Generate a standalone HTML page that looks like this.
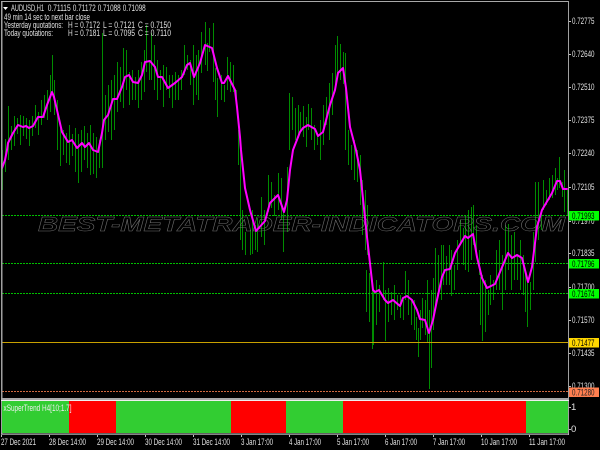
<!DOCTYPE html>
<html><head><meta charset="utf-8"><style>
html,body{margin:0;padding:0;background:#000;width:600px;height:450px;overflow:hidden}
svg{display:block}
text{font-family:"Liberation Sans",sans-serif;font-size:9.5px;fill:#e0e0e0}
</style></head><body>
<svg width="600" height="450" viewBox="0 0 600 450" xmlns="http://www.w3.org/2000/svg">
<rect width="600" height="450" fill="#000"/>
<path fill="none" stroke="#008c00" stroke-width="1" d="M2.5 150V190M5.5 139V172M8.5 106V160M11.5 126V150M14.5 116V146M17.5 118V134M20.5 115V145M23.5 116V136M26.5 118V139M29.5 120V146M32.5 116V136M35.5 105V128M38.5 112V135M41.5 100V125M44.5 95V118M47.5 90V120M50.5 75V112M52.5 55V95M54.5 80V115M57.5 100V150M60.5 128V166M63.5 130V155M66.5 133V163M69.5 125V165M72.5 134V156M75.5 128V172M78.5 134V183M81.5 130V172M84.5 126V160M87.5 133V168M90.5 125V175M93.5 133V174M96.5 137V178M99.5 140V168M102.5 33V168M105.5 95V140M108.5 85V132M111.5 80V140M114.5 75V130M117.5 62V112M120.5 67V102M123.5 48V108M126.5 50V90M129.5 72V105M132.5 70V100M135.5 77V100M138.5 70V108M141.5 62V100M144.5 50V92M146.5 25V72M149.5 60V80M151.5 33V80M154.5 45V90M157.5 60V100M160.5 70V90M163.5 65V107M166.5 67V90M169.5 75V98M172.5 75V108M175.5 72V100M178.5 75V100M181.5 70V90M184.5 45V75M187.5 55V70M190.5 60V85M193.5 45V105M196.5 55V95M198.5 50V100M201.5 32V73M205.5 22V65M207.5 43V71M209.5 28V52M213.5 23V82M215.5 68V100M217.5 78V117M221.5 75V100M224.5 85V102M227.5 57V90M230.5 62V92M233.5 65V92M236.5 90V105M238.5 130V165M240.5 140V240M242.5 210V250M245.5 232V255M250.5 230V255M252.5 210V254M255.5 225V250M257.5 218V252M261.5 197V237M264.5 210V245M268.5 175V212M271.5 182V208M274.5 195V216M278.5 173V210M281.5 178V220M283.5 208V252M287.5 167V232M289.5 93V150M292.5 97V130M295.5 108V140M298.5 105V138M300.5 112V130M303.5 106V137M306.5 117V147M308.5 104V130M311.5 108V140M314.5 125V150M317.5 133V145M320.5 120V160M323.5 105V145M326.5 97V125M329.5 83V140M332.5 73V115M335.5 45V90M337.5 36V78M340.5 44V80M343.5 52V84M345.5 53V150M348.5 130V165M351.5 145V170M354.5 140V180M357.5 150V182M360.5 155V205M362.5 180V235M365.5 190V250M367.5 205V255M366.5 270V312M369.5 273V322M372.5 280V349M373.5 292V345M376.5 280V325M379.5 285V312M383.5 262V300M385.5 290V341M388.5 288V322M391.5 292V315M394.5 285V320M397.5 295V310M400.5 295V318M403.5 300V320M405.5 271V300M408.5 280V315M411.5 300V325M414.5 300V330M416.5 317V340M418.5 328V357M420.5 310V340M422.5 298V328M425.5 300V335M427.5 280V343M429.5 310V389M431.5 290V368M433.5 278V330M435.5 248V310M438.5 255V290M441.5 245V300M443.5 245V285M446.5 256V285M449.5 245V285M451.5 250V296M454.5 265V290M457.5 240V270M460.5 220V245M463.5 228V265M465.5 215V270M468.5 210V272M471.5 207V260M473.5 205V245M476.5 225V255M479.5 250V275M480.5 277V325M482.5 275V341M485.5 280V332M488.5 290V315M490.5 275V305M493.5 280V300M496.5 250V290M499.5 240V290M502.5 255V310M505.5 225V290M508.5 224V270M511.5 235V290M514.5 232V280M517.5 255V280M520.5 240V290M523.5 255V295M525.5 270V312M527.5 283V327M530.5 282V310M533.5 232V290M535.5 182V262M538.5 182V240M541.5 210V230M543.5 180V210M546.5 190V205M549.5 178V200M552.5 175V198M555.5 168V195M557.5 178V190M559.5 157V188M562.5 182V197M564.5 170V212M567.5 190V215"/>
<line x1="2" x2="568" y1="215.5" y2="215.5" stroke="#00c000" stroke-dasharray="2 1"/>
<line x1="2" x2="568" y1="263.5" y2="263.5" stroke="#00c000" stroke-dasharray="2 1"/>
<line x1="2" x2="568" y1="293.5" y2="293.5" stroke="#00c000" stroke-dasharray="2 1"/>
<line x1="2" x2="568" y1="342.5" y2="342.5" stroke="#c8a000"/>
<line x1="2" x2="568" y1="391.5" y2="391.5" stroke="#d06a40" stroke-dasharray="2 1"/>
<text x="38" y="231" textLength="527" lengthAdjust="spacingAndGlyphs" style="font-size:20px;font-style:italic;font-weight:bold;fill:none;stroke:#6e6e6e;stroke-width:.45">BEST-METATRADER-INDICATORS.COM</text>
<polyline fill="none" stroke="#ff00ff" stroke-width="2" stroke-linejoin="round" stroke-linecap="round" points="2,168 5,160 7,150 8,143 13,133 18,125 23,127 26,126 29,128 33,126 38,117 43,117 47,105 52,92 54,97 57,110 62,132 68,142 72,140 77,148 82,143 85,147 89,143 93,150 98,152 102,133 104,120 108,115 113,99 117,99 122,87 125,77 129,75 133,82 138,83 142,75 145,62 150,61 155,67 158,77 162,77 168,88 175,83 182,77 187,65 190,63 194,77 200,63 205,45 212,48 217,68 222,83 224,83 228,76 235,90 237,107 240,137 241,150 245,188 250,210 256,231 265,221 270,203 278,195 284,212 287,200 290,170 293,150 300,132 303,128 308,125 315,129 318,136 323,132 330,105 335,90 338,73 343,68 346,88 350,127 356,150 360,170 367,237 373,290 375,292 379,290 385,300 388,303 393,300 400,306 403,298 407,296 412,300 417,310 420,319 425,320 429,333 433,320 437,300 442,277 445,270 450,269 455,253 465,236 468,238 473,234 477,257 482,278 487,288 495,284 500,272 508,253 512,258 517,255 522,258 528,282 532,267 537,227 542,210 552,193 557,181 560,181 563,189 567,189"/>
<!-- frame -->
<rect x="0" y="0" width="2" height="450" fill="#000"/>
<rect x="1" y="1" width="1.5" height="433" fill="#a0a0a0"/>
<rect x="1" y="1" width="568" height="1" fill="#a8a8a8"/>
<rect x="568" y="1" width="1" height="434" fill="#a0a0a0"/>
<rect x="1" y="398" width="568" height="2" fill="#a8a8a8"/>
<rect x="1" y="400" width="568" height="1" fill="#eee"/>
<!-- indicator blocks -->
<rect x="2" y="401" width="566" height="32" fill="#32cd32"/>
<rect x="69" y="401" width="47" height="32" fill="#ff0000"/>
<rect x="231" y="401" width="55" height="32" fill="#ff0000"/>
<rect x="343" y="401" width="183" height="32" fill="#ff0000"/>
<rect x="1" y="433.5" width="568" height="1.2" fill="#c0c0c0"/>
<text x="3.5" y="411" textLength="68" lengthAdjust="spacingAndGlyphs" style="fill:#eee">xSuperTrend H4[10;1.7]</text>
<!-- header -->
<path d="M3 7H8L5.5 10Z" fill="#fff"/>
<text x="11" y="11" textLength="33" lengthAdjust="spacingAndGlyphs">AUDUSD,H1</text>
<text x="47.7" y="11" textLength="23" lengthAdjust="spacingAndGlyphs">0.71115</text>
<text x="72.7" y="11" textLength="23" lengthAdjust="spacingAndGlyphs">0.71172</text>
<text x="97.7" y="11" textLength="23" lengthAdjust="spacingAndGlyphs">0.71088</text>
<text x="122.7" y="11" textLength="23" lengthAdjust="spacingAndGlyphs">0.71098</text>
<text x="4" y="20" textLength="86" lengthAdjust="spacingAndGlyphs">49 min 14 sec to next bar close</text>
<text x="4" y="28" textLength="59" lengthAdjust="spacingAndGlyphs">Yesterday quotations:</text>
<text x="68" y="28" textLength="32" lengthAdjust="spacingAndGlyphs">H = 0.7172</text>
<text x="103" y="28" textLength="32" lengthAdjust="spacingAndGlyphs">L = 0.7121</text>
<text x="138" y="28" textLength="33" lengthAdjust="spacingAndGlyphs">C = 0.7150</text>
<text x="4" y="36" textLength="49" lengthAdjust="spacingAndGlyphs">Today quotations:</text>
<text x="68" y="36" textLength="32" lengthAdjust="spacingAndGlyphs">H = 0.7181</text>
<text x="103" y="36" textLength="32" lengthAdjust="spacingAndGlyphs">L = 0.7095</text>
<text x="138" y="36" textLength="33" lengthAdjust="spacingAndGlyphs">C = 0.7110</text>
<!-- price axis -->
<path stroke="#c0c0c0" fill="none" d="M569 21.5H571M569 54.5H571M569 87.5H571M569 120.5H571M569 153.5H571M569 187.5H571M569 221.5H571M569 253.5H571M569 287.5H571M569 320.5H571M569 353.5H571M569 386.5H571M569 407.5H571M569 429.5H571"/>
<text x="572" y="24" textLength="22.5" lengthAdjust="spacingAndGlyphs">0.72775</text>
<text x="572" y="57" textLength="22.5" lengthAdjust="spacingAndGlyphs">0.72640</text>
<text x="572" y="90" textLength="22.5" lengthAdjust="spacingAndGlyphs">0.72510</text>
<text x="572" y="123" textLength="22.5" lengthAdjust="spacingAndGlyphs">0.72375</text>
<text x="572" y="156" textLength="22.5" lengthAdjust="spacingAndGlyphs">0.72240</text>
<text x="572" y="190" textLength="22.5" lengthAdjust="spacingAndGlyphs">0.72105</text>
<text x="572" y="224" textLength="22.5" lengthAdjust="spacingAndGlyphs">0.71970</text>
<text x="572" y="256" textLength="22.5" lengthAdjust="spacingAndGlyphs">0.71835</text>
<text x="572" y="290" textLength="22.5" lengthAdjust="spacingAndGlyphs">0.71700</text>
<text x="572" y="323" textLength="22.5" lengthAdjust="spacingAndGlyphs">0.71570</text>
<text x="572" y="356" textLength="22.5" lengthAdjust="spacingAndGlyphs">0.71435</text>
<text x="572" y="389" textLength="22.5" lengthAdjust="spacingAndGlyphs">0.71300</text>
<rect x="569" y="211" width="30" height="9.5" fill="#00ff00"/>
<text x="572" y="219" textLength="22.5" lengthAdjust="spacingAndGlyphs" style="fill:#000">0.71993</text>
<rect x="569" y="259" width="30" height="9.5" fill="#00ff00"/>
<text x="572" y="267" textLength="22.5" lengthAdjust="spacingAndGlyphs" style="fill:#000">0.71796</text>
<rect x="569" y="289" width="30" height="9.5" fill="#00ff00"/>
<text x="572" y="297" textLength="22.5" lengthAdjust="spacingAndGlyphs" style="fill:#000">0.71674</text>
<rect x="569" y="338" width="30" height="9.5" fill="#ffd700"/>
<text x="572" y="346" textLength="22.5" lengthAdjust="spacingAndGlyphs" style="fill:#000">0.71477</text>
<rect x="569" y="387.5" width="30" height="9.5" fill="#ff7f50"/>
<text x="572" y="395.5" textLength="22.5" lengthAdjust="spacingAndGlyphs" style="fill:#222">0.71280</text>
<text x="571" y="410">1</text>
<text x="571" y="432">0</text>
<!-- time axis -->
<path stroke="#c0c0c0" fill="none" d="M1.5 435V437M49.5 435V437M97.5 435V437M145.5 435V437M193.5 435V437M241.5 435V437M289.5 435V437M337.5 435V437M385.5 435V437M433.5 435V437M481.5 435V437M529.5 435V437"/>
<text x="1" y="445" textLength="35" lengthAdjust="spacingAndGlyphs">27 Dec 2021</text>
<text x="49" y="445" textLength="37" lengthAdjust="spacingAndGlyphs">28 Dec 14:00</text>
<text x="97" y="445" textLength="37" lengthAdjust="spacingAndGlyphs">29 Dec 14:00</text>
<text x="145" y="445" textLength="37" lengthAdjust="spacingAndGlyphs">30 Dec 14:00</text>
<text x="193" y="445" textLength="37" lengthAdjust="spacingAndGlyphs">31 Dec 14:00</text>
<text x="241" y="445" textLength="32" lengthAdjust="spacingAndGlyphs">3 Jan 17:00</text>
<text x="289" y="445" textLength="32" lengthAdjust="spacingAndGlyphs">4 Jan 17:00</text>
<text x="337" y="445" textLength="32" lengthAdjust="spacingAndGlyphs">5 Jan 17:00</text>
<text x="385" y="445" textLength="32" lengthAdjust="spacingAndGlyphs">6 Jan 17:00</text>
<text x="433" y="445" textLength="32" lengthAdjust="spacingAndGlyphs">7 Jan 17:00</text>
<text x="481" y="445" textLength="36" lengthAdjust="spacingAndGlyphs">10 Jan 17:00</text>
<text x="529" y="445" textLength="36" lengthAdjust="spacingAndGlyphs">11 Jan 17:00</text>
</svg>
</body></html>
